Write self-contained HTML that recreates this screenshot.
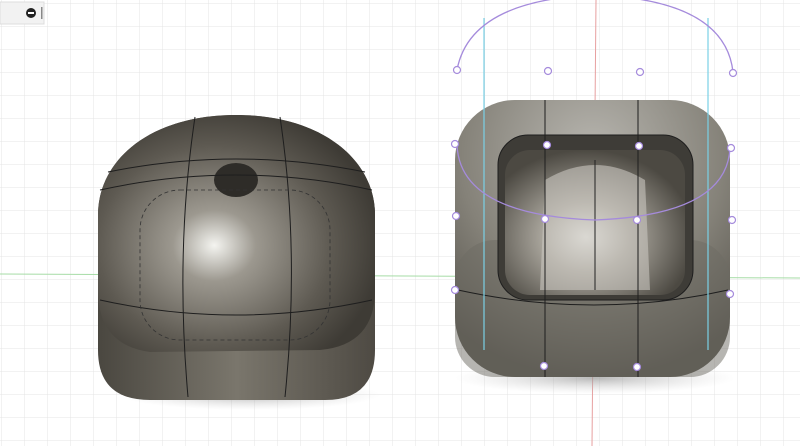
<!DOCTYPE html>
<html><head><style>
html,body{margin:0;padding:0;width:800px;height:446px;overflow:hidden;background:#fff}
</style></head><body>
<svg width="800" height="446" viewBox="0 0 800 446" xmlns="http://www.w3.org/2000/svg">
<defs>
<pattern id="g" width="23" height="23" patternUnits="userSpaceOnUse" x="2" y="4">
<path d="M23 0V23M0 23H23" stroke="#e4e4e4" stroke-width="1" fill="none"/>
</pattern>
<radialGradient id="lb" cx="0.42" cy="0.55" r="0.6">
<stop offset="0" stop-color="#f4f4f0"/><stop offset="0.25" stop-color="#9c988f"/><stop offset="0.7" stop-color="#5e5a52"/><stop offset="1" stop-color="#3e3b35"/>
</radialGradient>
<linearGradient id="side" x1="0" x2="1">
<stop offset="0" stop-color="#4a4740"/><stop offset="0.5" stop-color="#7a766c"/><stop offset="1" stop-color="#4e4a43"/>
</linearGradient>
<radialGradient id="rb" cx="0.5" cy="0.2" r="0.8">
<stop offset="0" stop-color="#b8b6b0"/><stop offset="0.6" stop-color="#858279"/><stop offset="1" stop-color="#55524b"/>
</radialGradient>
<radialGradient id="inn" cx="0.45" cy="0.6" r="0.6">
<stop offset="0" stop-color="#f2f2ee"/><stop offset="0.4" stop-color="#a9a59c"/><stop offset="1" stop-color="#4c4942"/>
</radialGradient>
<radialGradient id="sh" cx="0.5" cy="0.5" r="0.5">
<stop offset="0" stop-color="#999" stop-opacity="0.7"/><stop offset="1" stop-color="#ccc" stop-opacity="0"/>
</radialGradient>
</defs>
<rect width="800" height="446" fill="#fff"/>
<rect width="800" height="446" fill="url(#g)"/>
<line x1="0" y1="274" x2="800" y2="278" stroke="#a6dca6" stroke-width="1"/>
<line x1="596" y1="0" x2="592" y2="446" stroke="#e7a0a0" stroke-width="1"/>
<rect x="0" y="2" width="44" height="22" fill="#f2f2f2" stroke="#ddd"/>
<circle cx="31" cy="13" r="5" fill="#222"/><rect x="28" y="12" width="6" height="2" fill="#fff"/>
<rect x="41" y="7" width="1.5" height="12" fill="#888"/>
<ellipse cx="250" cy="395" rx="130" ry="15" fill="url(#sh)"/>
<path d="M98 215C98 160 150 115 236 115C322 115 375 160 375 215L375 350Q375 400 325 400L150 400Q98 400 98 350Z" fill="url(#side)"/>
<path d="M98 215C98 160 150 115 236 115C322 115 375 160 375 215L375 290Q375 345 320 350L150 352Q98 345 98 290Z" fill="url(#lb)"/>
<ellipse cx="236" cy="180" rx="22" ry="17" fill="#2e2c28"/>
<g fill="none" stroke="#1e1e1e" stroke-width="1">
<path d="M100 190Q236 160 372 190"/><path d="M100 300Q236 330 372 300"/>
<path d="M195 117Q175 250 188 397"/><path d="M280 117Q300 250 285 397"/>
<path d="M108 172Q236 146 365 172"/>
</g>
<g fill="none" stroke="#333" stroke-width="0.8" stroke-dasharray="4 3">
<rect x="140" y="190" width="190" height="150" rx="40"/>
</g>
<ellipse cx="595" cy="378" rx="140" ry="16" fill="url(#sh)"/>
<rect x="455" y="100" width="275" height="277" rx="60" fill="url(#rb)"/>
<rect x="455" y="240" width="275" height="137" rx="40" fill="#6e6b64" opacity="0.5"/>
<rect x="498" y="135" width="195" height="165" rx="30" fill="#3e3c37"/>
<rect x="505" y="150" width="180" height="145" rx="25" fill="url(#inn)"/>
<path d="M540 290L545 180Q595 150 645 180L650 290Z" fill="#c9c6bf" opacity="0.6"/>
<line x1="595" y1="160" x2="595" y2="290" stroke="#222"/>
<g fill="none" stroke="#1e1e1e" stroke-width="1">
<rect x="498" y="135" width="195" height="165" rx="30"/>
<path d="M458 290Q595 320 728 290"/>
<line x1="545" y1="100" x2="545" y2="377"/><line x1="638" y1="100" x2="638" y2="377"/>
</g>
<g fill="none" stroke="#7ad0e6" stroke-width="1.2">
<line x1="484" y1="18" x2="484" y2="350"/><line x1="708" y1="18" x2="708" y2="350"/>
</g>
<g fill="none" stroke="#a58bdc" stroke-width="1.3">
<path d="M457 70Q470 0 595 -5Q725 0 733 72"/>
<path d="M457 145Q460 215 595 220Q728 215 730 147"/>
</g>
<g fill="#fff" stroke="#a58bdc" stroke-width="1.2">
<circle cx="457" cy="70" r="3.5"/><circle cx="548" cy="71" r="3.5"/><circle cx="640" cy="72" r="3.5"/><circle cx="733" cy="73" r="3.5"/>
<circle cx="455" cy="144" r="3.5"/><circle cx="547" cy="145" r="3.5"/><circle cx="639" cy="146" r="3.5"/><circle cx="731" cy="148" r="3.5"/>
<circle cx="456" cy="216" r="3.5"/><circle cx="545" cy="219" r="3.5"/><circle cx="637" cy="220" r="3.5"/><circle cx="732" cy="220" r="3.5"/>
<circle cx="455" cy="290" r="3.5"/><circle cx="730" cy="294" r="3.5"/>
<circle cx="544" cy="366" r="3.5"/><circle cx="637" cy="367" r="3.5"/>
</g>
</svg>
</body></html>
